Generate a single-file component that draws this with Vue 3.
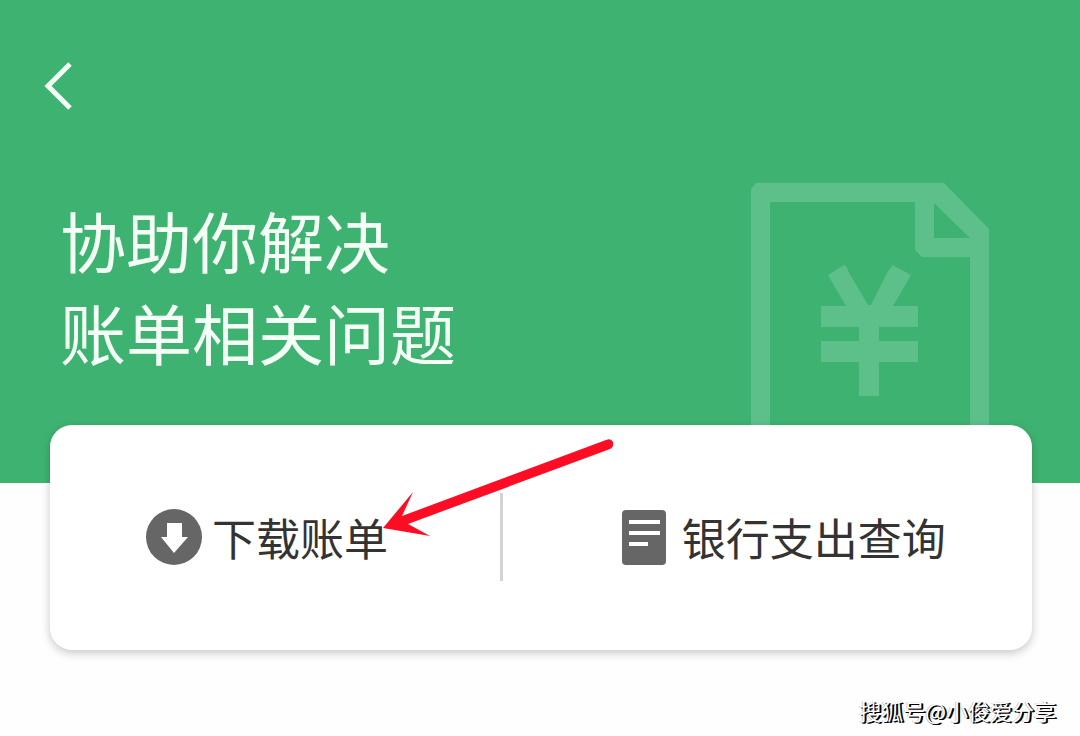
<script setup>
const titleLines = ['协助你解决', '账单相关问题']
</script>

<template>
  <main class="page">
    <header class="hero">
      <button class="back" type="button" aria-label="返回">
        <svg width="32" height="48" viewBox="0 0 32 48" aria-hidden="true">
          <path d="M28 2 6 24 28 46" fill="none" stroke="#f4fff6" stroke-width="5" />
        </svg>
      </button>
      <h1 class="title">
        <span v-for="line in titleLines" :key="line" class="line">{{ line }}</span>
      </h1>
      <svg class="bill" width="240" height="300" viewBox="0 0 240 300" aria-hidden="true">
        <path
          fill="#5dc08a"
          fill-rule="evenodd"
          d="M6 0H194L239 46V300H220V74H172L165 67V19H20V300H1V6ZM184 20V55H220Z"
        />
        <path
          fill="#5dc08a"
          d="M78 92 94 82Q97 83 98 88L118 122H121L138 88Q141 86 142 82L161 92 143 123H168V144H129V158H168V179H129V213H109V179H71V158H109V144H71V123H96Z"
        />
      </svg>
    </header>

    <nav class="card" aria-label="账单服务">
      <button class="action download" type="button">
        <svg class="icon" width="56" height="56" viewBox="0 0 56 56" aria-hidden="true">
          <circle cx="28" cy="28" r="28" fill="#666" />
          <path d="M21 14H36V28H42L28 44 15 28H21Z" fill="#fff" />
        </svg>
        <span>下载账单</span>
      </button>
      <button class="action query" type="button">
        <svg class="icon" width="45" height="56" viewBox="0 0 45 56" aria-hidden="true">
          <rect x="1" y="1" width="44" height="55" rx="4" fill="#666" />
          <path d="M8 13H39M8 24H39M8 35H27" stroke="#fff" stroke-width="4" />
        </svg>
        <span>银行支出查询</span>
      </button>
      <svg class="arrow" width="236" height="110" viewBox="0 0 236 110" aria-hidden="true">
        <path
          fill="#fc0d23"
          d="M3 103 33 67 22 91 226 15Q231 13 233 17 234 22 230 24L28 99 50 111Z"
        />
      </svg>
    </nav>

    <footer class="credit">搜狐号@小俊爱分享</footer>
  </main>
</template>

<style>
body {
  background: #fefefe;
}
</style>

<style scoped>
.page {
  font-family: "Liberation Sans", "Noto Sans CJK SC", sans-serif;
}

.hero {
  position: relative;
  overflow: hidden;
  box-sizing: border-box;
  padding: 62px 60px 106px;
  background: #3eb371;
}

button {
  border: 0;
  padding: 0;
  background: none;
  font: inherit;
  color: inherit;
  cursor: pointer;
}

.back {
  display: block;
  margin-left: -18px;
}

.back svg {
  display: block;
}

.title {
  margin: 83px 0 0;
  font-size: 66px;
  font-weight: 400;
  line-height: 92px;
  font-family: "Noto Sans CJK SC", sans-serif;
  color: #f4fff6;
}

.line {
  display: block;
}

.bill {
  position: absolute;
  top: 183px;
  right: 90px;
}

.card {
  position: relative;
  display: flex;
  align-items: center;
  margin: -58px 48px 0 50px;
  padding: 68px 0 69px;
  border-radius: 22px;
  background: #fff;
  box-shadow: 0 3px 10px rgba(0, 0, 0, 0.22);
}

.action {
  display: flex;
  align-items: center;
  box-sizing: border-box;
  height: 88px;
  font-family: "Noto Sans CJK SC", sans-serif;
  font-size: 44px;
  line-height: 64px;
  color: #333;
  white-space: nowrap;
}

.icon {
  flex: none;
}

.download {
  flex: 0 0 45.8%;
  gap: 10px;
  padding-left: 96px;
}

.query {
  flex: 1;
  gap: 16px;
  padding-left: 118px;
  border-left: 3px solid #d3d3d3;
}

.arrow {
  position: absolute;
  top: 0;
  left: 330px;
  overflow: visible;
  pointer-events: none;
}

.credit {
  margin: 44px 24px 0;
  font-family: "Noto Sans CJK SC", sans-serif;
  font-size: 22px;
  line-height: 32px;
  text-align: right;
  color: #fff;
  text-shadow: 1px 1px 0 #000, 2px 1px 0 #000, -1px 0 0 #ccc;
}
</style>
